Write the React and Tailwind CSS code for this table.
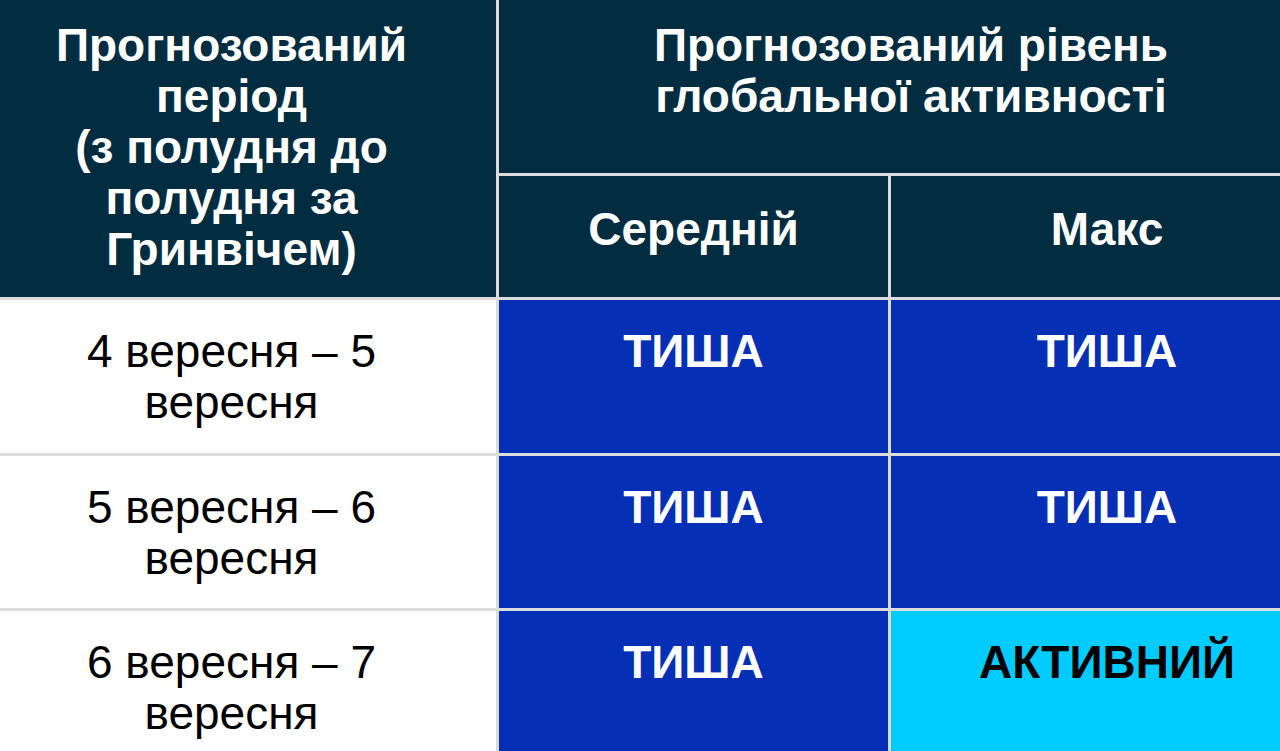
export default function App() {
  const font = { fontFamily: '"Liberation Sans", Arial, sans-serif' };
  return (
    <div className="w-[1280px] h-[751px] overflow-hidden bg-white" style={font}>
      <div className="ml-[-33px] w-[1356px] grid grid-cols-[529px_389px_432px] grid-rows-[173px_121px_153px_152px_152px] gap-[3px] bg-[#dcdcdc] text-[46px] leading-[51px]">
        <div className="row-span-2 bg-[#022c40] text-white font-bold text-center pt-[20px]">
          Прогнозований
          <br />
          період
          <br />
          (з полудня до
          <br />
          полудня за
          <br />
          Гринвічем)
        </div>
        <div className="col-span-2 bg-[#022c40] text-white font-bold text-center pt-[20px]">
          Прогнозований рівень
          <br />
          глобальної активності
        </div>
        <div className="bg-[#022c40] text-white font-bold text-center pt-[28px]">Середній</div>
        <div className="bg-[#022c40] text-white font-bold text-center pt-[28px]">Макс</div>

        <div className="bg-white text-black text-center pt-[26px]">
          4 вересня – 5
          <br />
          вересня
        </div>
        <div className="bg-[#052fb4] text-white font-bold text-center pt-[26px]">ТИША</div>
        <div className="bg-[#052fb4] text-white font-bold text-center pt-[26px]">ТИША</div>

        <div className="bg-white text-black text-center pt-[26px]">
          5 вересня – 6
          <br />
          вересня
        </div>
        <div className="bg-[#052fb4] text-white font-bold text-center pt-[26px]">ТИША</div>
        <div className="bg-[#052fb4] text-white font-bold text-center pt-[26px]">ТИША</div>

        <div className="bg-white text-black text-center pt-[26px]">
          6 вересня – 7
          <br />
          вересня
        </div>
        <div className="bg-[#052fb4] text-white font-bold text-center pt-[26px]">ТИША</div>
        <div className="bg-[#00ccff] text-black font-bold text-center pt-[26px]">АКТИВНИЙ</div>
      </div>
    </div>
  );
}
